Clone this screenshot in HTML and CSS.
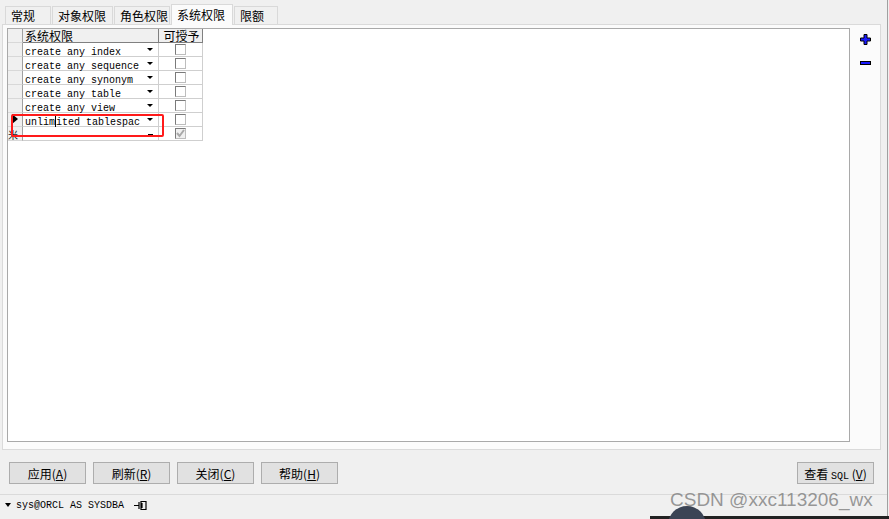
FILE: index.html
```html
<!DOCTYPE html>
<html lang="zh-CN">
<head>
    <meta charset="UTF-8">
    <title>系统权限</title>
    <link rel="stylesheet" href="styles.css">
</head>
<body>
    <div class="window">
        <div class="tabs">
            <div class="tab t1">常规</div>
            <div class="tab t2">对象权限</div>
            <div class="tab t3">角色权限</div>
            <div class="tab t4 active">系统权限</div>
            <div class="tab t5">限额</div>
        </div>
        <div class="panel">
            <div class="grid-box">
                <div class="grid">
                    <div class="row head">
                        <div class="rh"></div>
                        <div class="c1">系统权限</div>
                        <div class="c2">可授予</div>
                    </div>
                    <div class="row"><div class="rh"></div><div class="c1"><span class="val">create any index</span><span class="dd"></span></div><div class="c2"><span class="chk"></span></div></div>
                    <div class="row"><div class="rh"></div><div class="c1"><span class="val">create any sequence</span><span class="dd"></span></div><div class="c2"><span class="chk"></span></div></div>
                    <div class="row"><div class="rh"></div><div class="c1"><span class="val">create any synonym</span><span class="dd"></span></div><div class="c2"><span class="chk"></span></div></div>
                    <div class="row"><div class="rh"></div><div class="c1"><span class="val">create any table</span><span class="dd"></span></div><div class="c2"><span class="chk"></span></div></div>
                    <div class="row"><div class="rh"></div><div class="c1"><span class="val">create any view</span><span class="dd"></span></div><div class="c2"><span class="chk"></span></div></div>
                    <div class="row current"><div class="rh"><span class="arrow"></span></div><div class="c1"><span class="val">unlim<i class="caret"></i>ited tablespac</span><span class="dd"></span></div><div class="c2"><span class="chk"></span></div></div>
                    <div class="row new"><div class="rh"><span class="star">米</span></div><div class="c1"><span class="val"></span><span class="dd dash"></span></div><div class="c2"><span class="chk on">
                        <svg width="9" height="9" viewBox="0 0 9 9"><path d="M1 4 L3.5 7 L8 1" fill="none" stroke="#a8a8a8" stroke-width="2"/></svg>
                    </span></div></div>
                </div>
                <div class="mark"></div>
            </div>
            <div class="side">
                <svg class="pm" width="11" height="11" viewBox="0 0 11 11"><path d="M4 0.5h3v3.5h3.5v3h-3.5v3.5h-3v-3.5h-3.5v-3h3.5z" fill="#1a1aff" stroke="#000" stroke-width="1"/></svg>
                <svg class="pm minus" width="11" height="5" viewBox="0 0 11 5"><rect x="0.5" y="0.5" width="10" height="3" fill="#1a1aff" stroke="#000" stroke-width="1"/></svg>
            </div>
        </div>
        <div class="buttons">
            <button class="btn">应用(<u>A</u>)</button>
            <button class="btn">刷新(<u>R</u>)</button>
            <button class="btn">关闭(<u>C</u>)</button>
            <button class="btn">帮助(<u>H</u>)</button>
            <button class="btn sql">查看 <span class="mono">SQL</span> (<u>V</u>)</button>
        </div>
        <div class="status">
            <span class="down"></span>
            <span class="conn">sys@ORCL AS SYSDBA</span>
            <svg width="13" height="9" viewBox="0 0 13 9"><path d="M0 4.5h5M5 1v7M7 0.5h5v8h-5zM8 2v5" fill="none" stroke="#000" stroke-width="1.2"/></svg>
        </div>
    </div>
    <div class="watermark">CSDN @xxc113206_wx</div>
    <div class="taskbar"></div>
    <div class="blob"></div>
</body>
</html>
```

FILE: styles.css
```css
body {
    margin: 0;
    width: 889px;
    height: 519px;
    overflow: hidden;
    background-color: #f0f0f0;
    font-family: "Noto Sans CJK SC", sans-serif;
    font-size: 12px;
    color: #000;
    position: relative;
}

.window {
    width: 887px;
    height: 516px;
    border-right: 1px solid #a0a0a0;
    display: flex;
    flex-direction: column;
}

/* 选项卡 */
.tabs {
    display: flex;
    padding: 6px 0 0 5px;
    height: 18px;
}
.tab {
    line-height: 17px;
    padding-left: 5px;
    border: 1px solid #d9d9d9;
    border-bottom: none;
    margin-right: 1px;
    font-size: 12px;
    box-sizing: border-box;
    height: 18px;
}
.t1 { width: 46px; }
.t2 { width: 61px; }
.t3 { width: 56px; }
.t4 { width: 62px; }
.t5 { width: 44px; }
.tab.active {
    background-color: #fbfbfb;
    margin-top: -2px;
    height: 21px;
    line-height: 19px;
    position: relative;
    z-index: 1;
}

.panel {
    margin: 0 6px 0 2px;
    height: 426px;
    border: 1px solid #dadada;
    background-color: #fbfbfb;
    display: flex;
    padding: 3px 0 0 4px;
    box-sizing: border-box;
}

.grid-box {
    width: 843px;
    height: 414px;
    background-color: #fff;
    border: 1px solid #a9a9a9;
    box-sizing: border-box;
    position: relative;
}

.grid {
    display: flex;
    flex-direction: column;
}
.row {
    display: grid;
    grid-template-columns: 15px 136px 44px;
    height: 14px;
}
.row > div {
    box-sizing: border-box;
    height: 14px;
    border-right: 1px solid #cfcfcf;
    border-bottom: 1px solid #cfcfcf;
    line-height: 13px;
    position: relative;
    white-space: nowrap;
}
.row .rh {
    background-color: #f0f0f0;
    border-right-color: #a0a0a0;
    border-bottom-color: #d8d8d8;
}
.row .c2 {
    text-align: center;
}
.head > div {
    background-color: #f0f0f0;
    border-bottom-color: #808080;
    border-right-color: #808080;
    padding-left: 2px;
    font-size: 12px;
    line-height: 13px;
}
.head .rh {
    padding: 0;
}

.val {
    font-family: "Liberation Mono", monospace;
    font-size: 10px;
    padding-left: 2px;
}
.caret {
    display: inline-block;
    width: 1px;
    height: 11px;
    background-color: #000;
    vertical-align: -2px;
}
.dd {
    position: absolute;
    right: 5px;
    top: 5px;
    width: 0;
    height: 0;
    border-left: 3px solid transparent;
    border-right: 3px solid transparent;
    border-top: 3px solid #000;
}
.dd.dash {
    border: none;
    top: 7px;
    width: 5px;
    height: 1px;
    background-color: #000;
}

.chk {
    display: inline-block;
    width: 11px;
    height: 11px;
    margin-top: 1px;
    box-sizing: border-box;
    border: 1px solid #bdbdbd;
    border-top-color: #7a7a7a;
    border-left-color: #7a7a7a;
    background-color: #fff;
    vertical-align: top;
    position: relative;
}
.chk.on {
    background-color: #f0f0f0;
}
.chk svg {
    position: absolute;
    left: 0;
    top: 0;
}

.arrow {
    display: block;
    margin: 1px 0 0 4px;
    width: 0;
    height: 0;
    border-top: 5px solid transparent;
    border-bottom: 5px solid transparent;
    border-left: 6px solid #000;
}
.star {
    display: block;
    font-size: 10px;
    line-height: 12px;
    margin-top: 2px;
    color: #222;
}

/* 红框标注 */
.mark {
    position: absolute;
    left: 3px;
    top: 85px;
    width: 149px;
    height: 19px;
    border: 2px solid #ff1a1a;
    border-radius: 2px;
}

.side {
    width: 30px;
    display: flex;
    flex-direction: column;
    align-items: center;
    padding-top: 6px;
}
.pm.minus {
    margin-top: 16px;
}

/* 按钮 */
.buttons {
    display: flex;
    padding: 12px 0 0 9px;
    height: 22px;
    gap: 7px;
}
.btn {
    width: 77px;
    height: 22px;
    padding: 0;
    border: 1px solid #adadad;
    background-color: #e1e1e1;
    font-family: "Noto Sans CJK SC", sans-serif;
    font-size: 12px;
    color: #000;
}
.btn u {
    text-decoration: underline;
}
.btn.sql {
    margin-left: auto;
    margin-right: 13px;
}
.mono {
    font-family: "Liberation Mono", monospace;
    font-size: 10px;
}

.status {
    margin-top: 10px;
    border-top: 1px solid #dadada;
    height: 20px;
    display: flex;
    align-items: center;
    padding-left: 5px;
    gap: 5px;
}
.down {
    width: 0;
    height: 0;
    border-left: 3px solid transparent;
    border-right: 3px solid transparent;
    border-top: 4px solid #000;
}
.conn {
    font-family: "Liberation Mono", monospace;
    font-size: 10px;
    margin-right: 5px;
}

.watermark {
    position: absolute;
    left: 670px;
    top: 489px;
    font-family: "Liberation Sans", sans-serif;
    font-size: 19px;
    color: rgba(120, 120, 120, 0.75);
}
.taskbar {
    position: absolute;
    left: 650px;
    top: 516px;
    width: 239px;
    height: 3px;
    background-color: #222;
}
.blob {
    position: absolute;
    left: 668px;
    top: 506px;
    width: 38px;
    height: 38px;
    border-radius: 50%;
    background-color: #3b4455;
}
```
